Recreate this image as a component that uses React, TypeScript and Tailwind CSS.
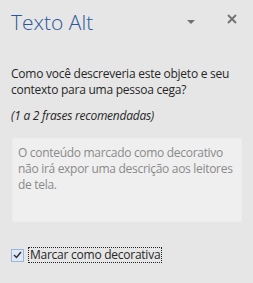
export default function App() {
  return (
    <div className="w-[253px] h-[283px] bg-[#e6e6e6] overflow-hidden font-['Open_Sans',sans-serif] text-[#262626]">
      {/* Header */}
      <div className="flex items-start pl-[11px] pt-[8px] h-[44px]">
        <h1 className="text-[21px] font-light leading-[28px] text-[#2b579a] flex-1">Texto Alt</h1>
        <div className="w-0 h-0 mt-[12px] mr-[32px] border-l-[4.5px] border-r-[4.5px] border-t-[4px] border-l-transparent border-r-transparent border-t-[#707070]" />
        <svg className="mt-[6px] mr-[16px]" width="10" height="10" viewBox="0 0 10 10">
          <path d="M1 1 L9 9 M9 1 L1 9" stroke="#707070" strokeWidth="1.8" />
        </svg>
      </div>

      {/* Body */}
      <div className="px-[11px] pt-[22px] text-[12px] leading-[16px] tracking-[-0.25px]">
        <p>Como você descreveria este objeto e seu contexto para uma pessoa cega?</p>
        <p className="mt-[10px] italic">(1 a 2 frases recomendadas)</p>

        <textarea
          readOnly
          className="mt-[14px] ml-px block w-[230px] h-[84px] resize-none bg-[#efefef] border border-[#ececec] pl-[5px] pr-[2px] pt-[6px] text-[12px] leading-[16px] tracking-[-0.3px] text-[#8a8a8a] outline-none"
          value="O conteúdo marcado como decorativo não irá expor uma descrição aos leitores de tela."
        />

        <label className="mt-[25px] flex items-center gap-[4px]">
          <span className="w-[13px] h-[13px] border border-[#9bb4dd] bg-[#dfe8f5] flex items-center justify-center">
            <svg width="9" height="8" viewBox="0 0 9 8">
              <path d="M1 4 L3.5 6.5 L8 1" stroke="#333" strokeWidth="1.5" fill="none" />
            </svg>
          </span>
          <span className="leading-[14px] border border-dotted border-[#222] px-[1px]">Marcar como decorativa</span>
        </label>
      </div>
    </div>
  )
}
